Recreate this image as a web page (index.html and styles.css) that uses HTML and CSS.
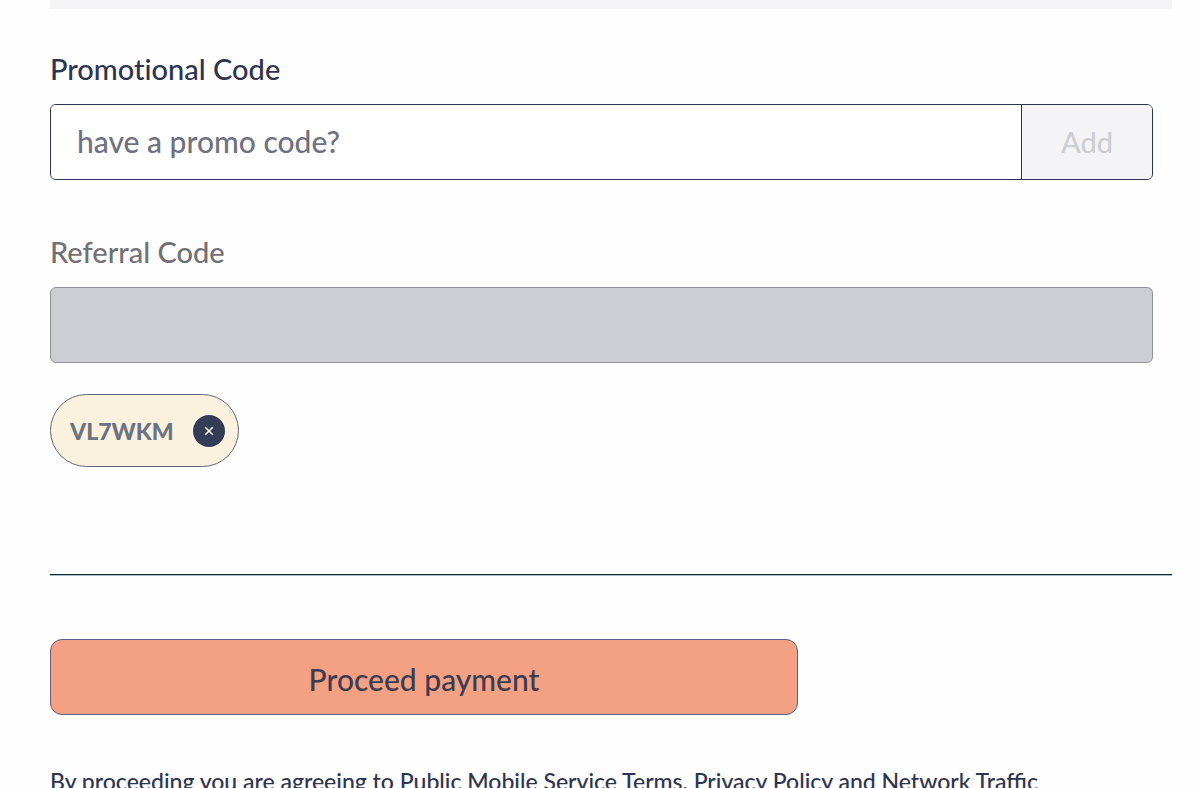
FILE: index.html
```html
<!DOCTYPE html>
<html lang="en">
<head>
  <meta charset="UTF-8">
  <title>Payment</title>
  <meta name="viewport" content="width=device-width, initial-scale=1.0">
  <link rel="stylesheet" href="styles.css">
</head>
<body>

  <main class="checkout">
    <div class="summary-end"></div>

    <form class="codes">
      <div class="field">
        <label for="promo">Promotional Code</label>
        <div class="input-group">
          <input type="text" id="promo" placeholder="have a promo code?">
          <button type="button" class="btn-add" disabled>Add</button>
        </div>
      </div>

      <div class="field field-disabled">
        <label for="referral">Referral Code</label>
        <input type="text" id="referral" disabled>
      </div>

      <div class="chip">
        <span>VL7WKM</span>
        <button type="button" class="chip-remove" aria-label="Remove">
          <svg width="10" height="10" viewBox="0 0 10 10" fill="none" stroke="#fff" stroke-width="1.6">
            <path d="M1.2 1.2L8.8 8.8M8.8 1.2L1.2 8.8"/>
          </svg>
        </button>
      </div>
    </form>

    <hr>

    <button type="button" class="btn-pay">Proceed payment</button>

    <p class="terms">By proceeding you are agreeing to Public Mobile Service Terms, Privacy Policy and Network Traffic</p>
  </main>

</body>
</html>
```
FILE: styles.css
```css
* { box-sizing: border-box; }

body {
  margin: 0;
  background-color: #fefefe;
  font-family: Lato, sans-serif;
  font-weight: 500;
  color: #2e3450;
  overflow: hidden;
}

input, button {
  font: inherit;
}

.checkout {
  padding: 0 28px 0 50px;
}

.summary-end {
  height: 9px;
  background-color: #f5f5f7;
}

.codes {
  display: flex;
  flex-direction: column;
  align-items: flex-start;
  padding: 42px 19px 0 0;
}

.field {
  width: 100%;
  margin-bottom: 54px;
  font-size: 29px;
  line-height: 36px;
}

.field label {
  display: block;
  margin-bottom: 17px;
  font-variant-ligatures: none;
}

.input-group {
  display: flex;
  height: 76px;
  border: 1px solid #2e3450;
  border-radius: 6px;
  overflow: hidden;
}

.input-group input {
  flex: 1;
  min-width: 0;
  padding: 0 26px 2px;
  border: none;
  outline: none;
  background-color: #fff;
  color: #2e3450;
  font-size: 30px;
}

.input-group input::placeholder {
  color: #6f7180;
  opacity: 1;
}

.btn-add {
  width: 131px;
  border: none;
  border-left: 1px solid #2e3450;
  background-color: #f4f4f7;
  color: #cdced2;
}

.field-disabled {
  margin-bottom: 31px;
  color: #717074;
}

.field-disabled input {
  display: block;
  width: 100%;
  height: 76px;
  padding: 0 26px;
  border: 1px solid #8f9199;
  border-radius: 6px;
  background-color: #cdced4;
}

.chip {
  display: flex;
  align-items: center;
  gap: 19px;
  height: 73px;
  padding: 0 13px 0 19px;
  border: 1px solid #62667a;
  border-radius: 37px;
  background-color: #faf1df;
  color: #6b7280;
  font-size: 23px;
  font-weight: 900;
}

.chip-remove {
  display: flex;
  align-items: center;
  justify-content: center;
  width: 32px;
  height: 32px;
  padding: 0;
  border: none;
  border-radius: 50%;
  background-color: #353c55;
}

hr {
  height: 2px;
  margin: 107px 0 63px;
  border: none;
  border-bottom: 1px solid #a9bec8;
  background-color: #14242f;
}

.btn-pay {
  display: block;
  width: 66.6667%;
  height: 76px;
  padding: 4px 6px 0;
  border: 1px solid #5d618a;
  border-radius: 12px;
  background-color: #f3a083;
  color: #3c3c50;
  font-size: 30px;
}

.terms {
  margin: 51px 0 0;
  font-size: 23px;
  line-height: 30px;
}
```
